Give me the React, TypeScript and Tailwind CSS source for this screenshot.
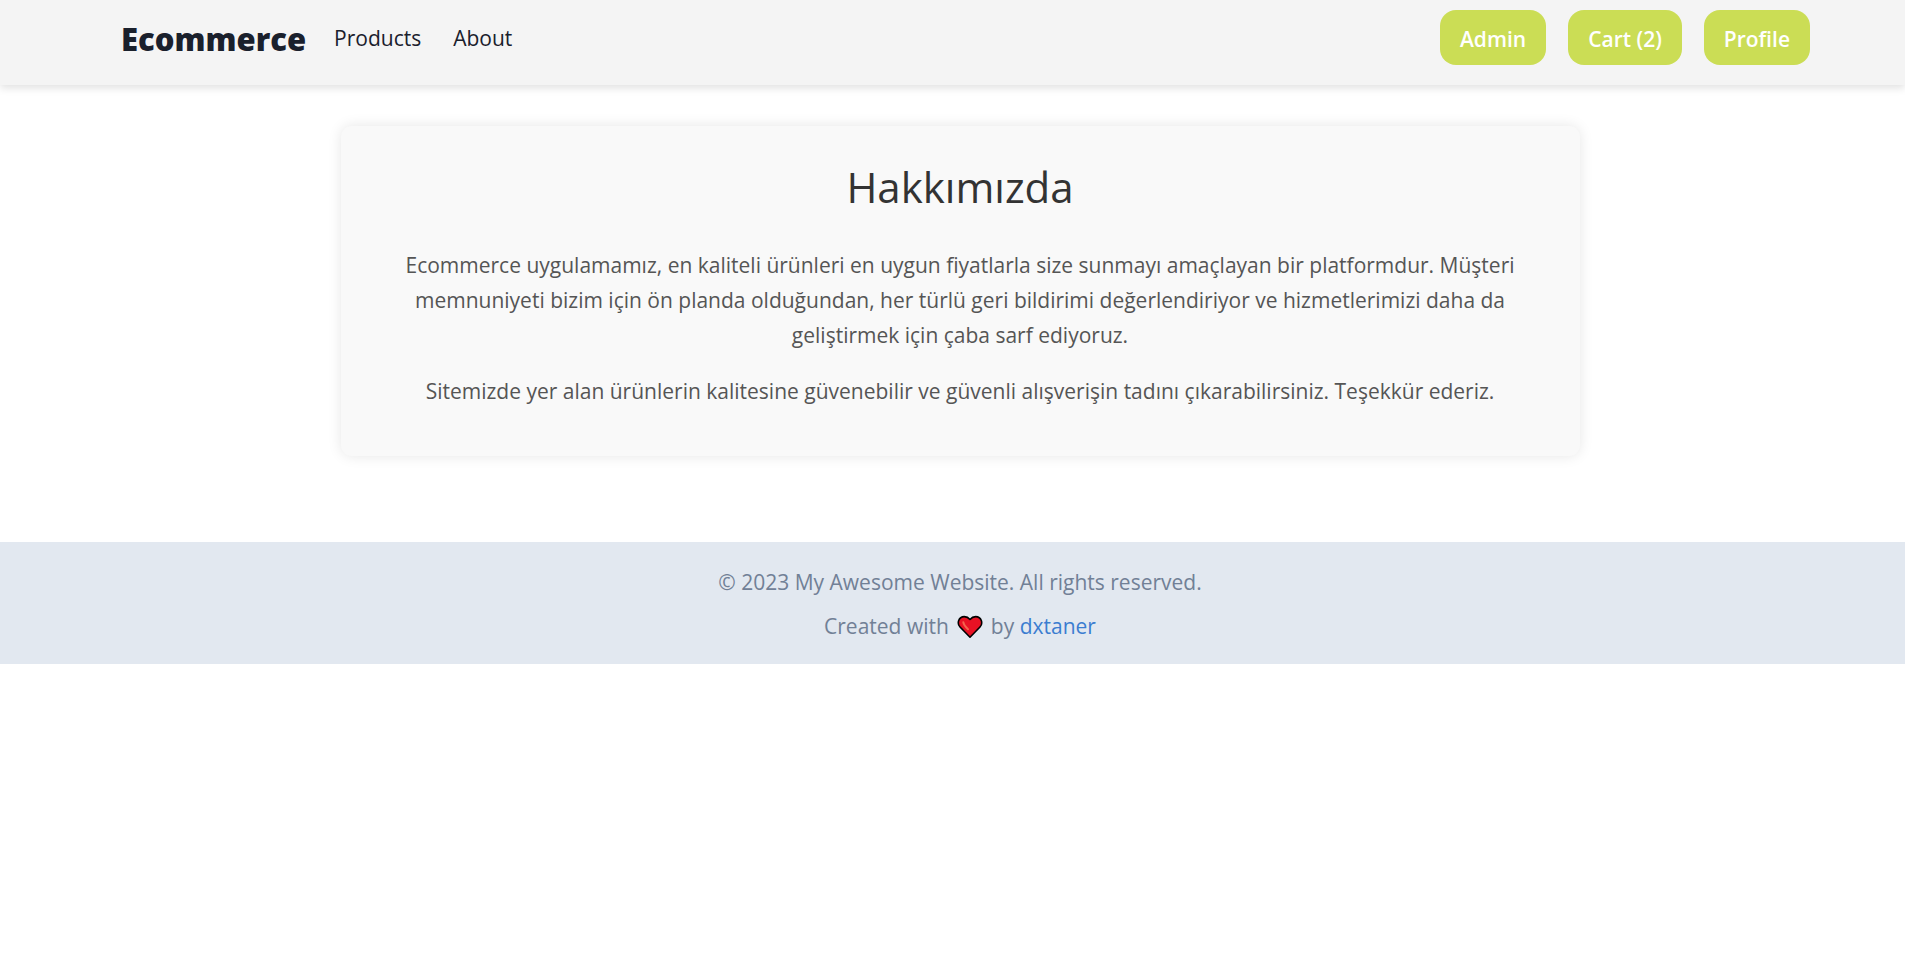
const navLinks = ["Products", "About"];
const actions = ["Admin", "Cart (2)", "Profile"];

function Heart() {
  return (
    <svg viewBox="0 0 26 24" className="mx-2 h-6 w-[26px]" role="img" aria-label="love">
      <path
        d="M13 22.2 3 12C-.2 8.600 1.300 1.700 7.300 1.600 9.800 1.600 11.600 2.700 13 4.400 14.400 2.700 16.200 1.600 18.700 1.600 24.700 1.700 26.200 8.600 23 12Z"
        fill="#e81224"
        stroke="#000"
        strokeWidth="1.600"
        strokeLinejoin="round"
      />
      <path d="M6.300 7.200C6.600 10 8.600 12 11 14.300" fill="none" stroke="#f4644d" strokeWidth="2" strokeLinecap="round" />
    </svg>
  );
}

export default function App() {
  return (
    <div className="min-h-screen bg-white font-['Open_Sans','Noto_Sans',sans-serif] text-[21px]">
      <header className="flex h-[85px] items-start justify-between bg-[#f4f4f4] pt-[10px] pr-[95px] pl-[121px] shadow-[0_3px_8px_rgba(0,0,0,0.12)]">
        <nav className="flex items-start text-[#1a202c]">
          <a href="#" className="text-[31px] leading-[58px] font-extrabold">
            Ecommerce
          </a>
          <div className="ml-7 flex gap-8">
            {navLinks.map((label) => (
              <a key={label} href="#" className="leading-[56px]">
                {label}
              </a>
            ))}
          </div>
        </nav>
        <div className="flex gap-[22px]">
          {actions.map((label) => (
            <button key={label} type="button" className="h-[55px] rounded-2xl bg-[#cbdd55] px-5 pt-1 font-semibold text-white">
              {label}
            </button>
          ))}
        </div>
      </header>

      <main className="flex justify-center pt-[41px] pl-[15px]">
        <section className="w-full max-w-[1239px] rounded-[11px] bg-[#f9f9f9] px-[55px] pt-[33px] pb-[47px] text-center shadow-[0_0_14px_rgba(0,0,0,0.1)]">
          <h1 className="text-[42px] leading-[56px] text-[#333]">Hakkımızda</h1>
          <div className="mt-[33px] flex flex-col gap-[21px] leading-[35px] text-[#555]">
            <p>
              Ecommerce uygulamamız, en kaliteli ürünleri en uygun fiyatlarla size sunmayı amaçlayan bir platformdur.
              Müşteri memnuniyeti bizim için ön planda olduğundan, her türlü geri bildirimi değerlendiriyor ve
              hizmetlerimizi daha da geliştirmek için çaba sarf ediyoruz.
            </p>
            <p>
              Sitemizde yer alan ürünlerin kalitesine güvenebilir ve güvenli alışverişin tadını çıkarabilirsiniz.
              Teşekkür ederiz.
            </p>
          </div>
        </section>
      </main>

      <footer className="mt-[86px] flex flex-col items-center gap-[11px] bg-[#e2e8f0] pt-6 pb-[21px] pl-[15px] leading-[33px] text-[#718096]">
        <p>© 2023 My Awesome Website. All rights reserved.</p>
        <p className="flex items-center">
          Created with <Heart /> by&nbsp;
          <a href="#" className="text-[#3b7dd0]">
            dxtaner
          </a>
        </p>
      </footer>
    </div>
  );
}
